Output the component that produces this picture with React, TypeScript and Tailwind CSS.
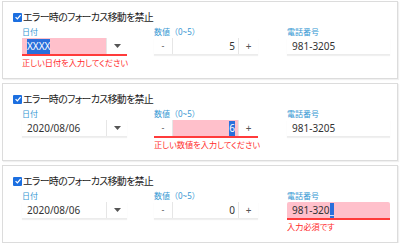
import React from "react";

const font =
  "font-['Noto_Sans','Noto_Sans_CJK_JP',sans-serif] [font-feature-settings:'palt']";

function Check() {
  return (
    <span className="flex h-[9px] w-[9px] items-center justify-center rounded-[1px] bg-[#1c6fe0]">
      <svg viewBox="0 0 10 10" className="h-[8px] w-[8px]">
        <path d="M2 5.2 4.2 7.3 8.2 2.6" fill="none" stroke="#fff" strokeWidth="1.6" />
      </svg>
    </span>
  );
}

function Label({ children }: { children: React.ReactNode }) {
  return (
    <div className="h-[10px] text-[8px] leading-[10px] text-[#3597d3] [font-feature-settings:normal]">
      {children}
    </div>
  );
}

function ErrorText({ children }: { children?: React.ReactNode }) {
  return (
    <div className="mt-[2px] h-[10px] whitespace-nowrap text-[8.2px] leading-[10px] text-[#ff2a2a]">
      {children}
    </div>
  );
}

function Group({ error, children }: { error?: boolean; children: React.ReactNode }) {
  return (
    <div
      className={
        error
          ? "flex h-[18px] border-b-2 border-[#ff3b3b]"
          : "flex h-[17px] border-b border-[#ececec] shadow-[0_1px_1px_rgba(0,0,0,0.06)]"
      }
    >
      {children}
    </div>
  );
}

function Sep() {
  return <div className="w-px bg-[#e6e6e6]" />;
}

function DateField({ value, error }: { value: React.ReactNode; error?: string }) {
  return (
    <div className="w-[105px]">
      <Label>日付</Label>
      <div className="mt-px">
        <Group error={!!error}>
          <div
            className={`flex h-[16px] flex-1 items-center px-[5px] text-[10px] text-[#333] ${
              error ? "bg-[#ffc0cb]" : ""
            }`}
          >
            {value}
          </div>
          <Sep />
          <div className="flex h-[16px] w-[20px] items-center justify-center">
            <svg viewBox="0 0 7 4" className="h-[4px] w-[7px]">
              <path d="M0 0h7L3.5 4z" fill="#555" />
            </svg>
          </div>
        </Group>
      </div>
      <ErrorText>{error}</ErrorText>
    </div>
  );
}

function NumberField({ value, error }: { value: React.ReactNode; error?: string }) {
  return (
    <div className="w-[104px]">
      <Label>数値（0~5）</Label>
      <div className="mt-px">
        <Group error={!!error}>
          <div className="flex h-[16px] w-[18px] items-center justify-center text-[9px] text-[#555]">
            -
          </div>
          <Sep />
          <div
            className={`flex h-[16px] flex-1 items-center justify-end pr-[3px] text-[10px] text-[#333] ${
              error ? "bg-[#ffc0cb]" : ""
            }`}
          >
            {value}
          </div>
          <Sep />
          <div className="flex h-[16px] w-[19px] items-center justify-center text-[10px] text-[#555]">
            +
          </div>
        </Group>
      </div>
      <ErrorText>{error}</ErrorText>
    </div>
  );
}

function PhoneField({ value, error }: { value: React.ReactNode; error?: string }) {
  return (
    <div className="w-[103px]">
      <Label>電話番号</Label>
      <div className="mt-px">
        <Group error={!!error}>
          <div
            className={`flex h-[16px] flex-1 items-center px-[5px] text-[10px] text-[#333] ${
              error ? "rounded-t-[2px] bg-[#ffc0cb]" : ""
            }`}
          >
            {value}
          </div>
        </Group>
      </div>
      <ErrorText>{error}</ErrorText>
    </div>
  );
}

function Sel({ children }: { children: React.ReactNode }) {
  return <span className="bg-[#2a6fdb] text-white">{children}</span>;
}

function Panel({ children }: { children: React.ReactNode }) {
  return (
    <div className="h-[78px] border border-[#dcdcdc] bg-white pt-[8px] pl-[10px] shadow-[1px_1px_1px_rgba(0,0,0,0.06)]">
      <div className="flex h-[14px] items-center gap-px">
        <Check />
        <span className="text-[10px] leading-[14px] tracking-[-0.75px] text-[#222]">
          エラー時のフォーカス移動を禁止
        </span>
      </div>
      <div className="mt-[3px] ml-[9px] grid grid-cols-[132px_133px_103px]">{children}</div>
    </div>
  );
}

export default function App() {
  return (
    <div className={`flex w-[400px] flex-col gap-[4px] bg-white px-[2px] pt-px ${font}`}>
      <Panel>
        <DateField value={<Sel>XXXX</Sel>} error="正しい日付を入力してください" />
        <NumberField value="5" />
        <PhoneField value="981-3205" />
      </Panel>
      <Panel>
        <DateField value="2020/08/06" />
        <NumberField value={<Sel>6</Sel>} error="正しい数値を入力してください" />
        <PhoneField value="981-3205" />
      </Panel>
      <Panel>
        <DateField value="2020/08/06" />
        <NumberField value="0" />
        <PhoneField
          value={
            <>
              981-320<Sel>_</Sel>
            </>
          }
          error="入力必須です"
        />
      </Panel>
    </div>
  );
}
